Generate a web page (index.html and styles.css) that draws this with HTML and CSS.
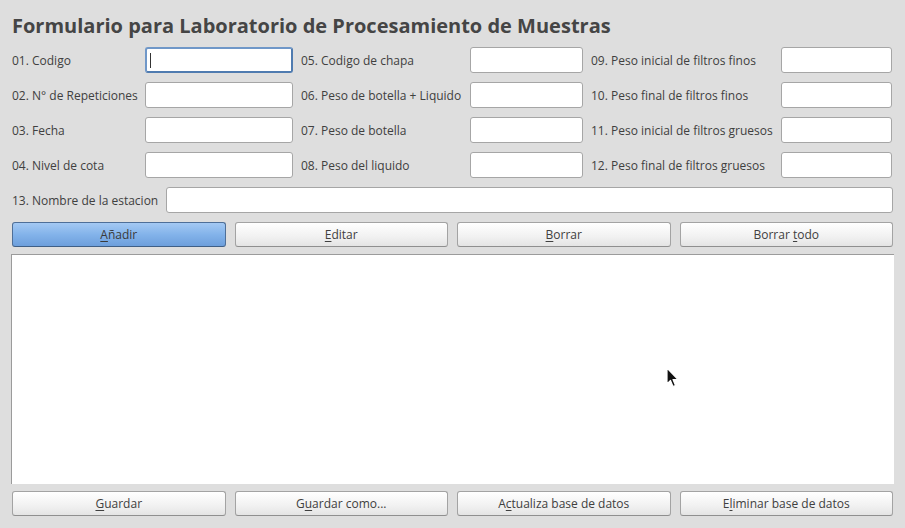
FILE: index.html
```html
<!DOCTYPE html>
<html lang="es">
<head>
<meta charset="utf-8">
<title>Formulario</title>
<link rel="stylesheet" href="styles.css">
</head>
<body>
<div class="app">
  <h1 class="title">Formulario para Laboratorio de Procesamiento de Muestras</h1>
  <div class="grid">
    <label class="lbl">01. Codigo</label><div class="inp focus"><span class="caret"></span></div>
    <label class="lbl pad">05. Codigo de chapa</label><div class="inp"></div>
    <label class="lbl pad">09. Peso inicial de filtros finos</label><div class="inp"></div>

    <label class="lbl">02. N° de Repeticiones</label><div class="inp"></div>
    <label class="lbl pad">06. Peso de botella + Liquido</label><div class="inp"></div>
    <label class="lbl pad">10. Peso final de filtros finos</label><div class="inp"></div>

    <label class="lbl">03. Fecha</label><div class="inp"></div>
    <label class="lbl pad">07. Peso de botella</label><div class="inp"></div>
    <label class="lbl pad">11. Peso inicial de filtros gruesos</label><div class="inp"></div>

    <label class="lbl">04. Nivel de cota</label><div class="inp"></div>
    <label class="lbl pad">08. Peso del liquido</label><div class="inp"></div>
    <label class="lbl pad">12. Peso final de filtros gruesos</label><div class="inp"></div>
  </div>
  <div class="row13">
    <label class="lbl lbl13">13. Nombre de la estacion</label><div class="inp wide"></div>
  </div>
  <div class="btns">
    <button class="btn primary"><u>A</u>ñadir</button>
    <button class="btn"><u>E</u>ditar</button>
    <button class="btn"><u>B</u>orrar</button>
    <button class="btn">Borrar <u>t</u>odo</button>
  </div>
  <div class="list"></div>
  <div class="btns bottom">
    <button class="btn"><u>G</u>uardar</button>
    <button class="btn">G<u>u</u>ardar como...</button>
    <button class="btn">A<u>c</u>tualiza base de datos</button>
    <button class="btn">E<u>l</u>iminar base de datos</button>
  </div>
  <svg class="pointer" width="14" height="22" viewBox="0 0 14 22">
    <path d="M1 1 L1 17 L4.5 13.5 L7 19.5 L9.5 18.5 L7 12.5 L12 12.5 Z" fill="#111" stroke="#fff" stroke-width="1.2" stroke-linejoin="round"/>
  </svg>
</div>
</body>
</html>
```
FILE: styles.css
```css
html, body {
  margin: 0;
  padding: 0;
  background: #dedede;
}
.app {
  position: relative;
  width: 905px;
  height: 528px;
  box-sizing: border-box;
  padding: 12px 12px 0 12px;
  font-family: "Open Sans", "Liberation Sans", sans-serif;
  color: #3f3f3f;
}
.title {
  margin: 0;
  font-size: 20px;
  font-weight: bold;
  line-height: 27px;
  color: #454545;
  height: 27px;
}
.grid {
  margin-top: 8px;
  display: grid;
  grid-template-columns: 133px 148px 177px 113px 198px 111px;
  grid-auto-rows: 26px;
  row-gap: 9px;
}
.lbl {
  font-size: 12px;
  line-height: 27px;
  white-space: nowrap;
  color: #404040;
}
.pad { padding-left: 8px; }
.inp {
  box-sizing: border-box;
  height: 26px;
  background: #fff;
  border: 1px solid #a6a6a6;
  border-radius: 3px;
  position: relative;
}
.inp.focus {
  border: 2px solid #5b86bb;
  border-color: #6f97c8 #4f7bb0 #4f7bb0 #6f97c8;
}
.caret {
  position: absolute;
  left: 3px;
  top: 4px;
  width: 1px;
  height: 15px;
  background: #333;
}
.row13 {
  margin-top: 9px;
  display: flex;
  height: 26px;
}
.lbl13 { width: 154px; flex: none; }
.inp.wide { flex: 1; }
.btns {
  margin-top: 9px;
  display: grid;
  grid-template-columns: repeat(4, 1fr);
  column-gap: 9px;
}
.btn {
  height: 25px;
  box-sizing: border-box;
  font-family: "Open Sans", "Liberation Sans", sans-serif;
  font-size: 12px;
  color: #404040;
  background: linear-gradient(#ffffff, #f1f1f1 60%, #e4e4e4);
  border: 1px solid #a3a3a3;
  border-bottom-color: #8f8f8f;
  border-radius: 3px;
  padding: 0;
}
.btn u { text-decoration-thickness: 1px; text-underline-offset: 2px; }
.btn.primary {
  background: linear-gradient(#a4c9f3, #83b3ea 50%, #6d9fdc);
  border-color: #4e6f98 #4e6f98 #3f5f86 #4e6f98;
  color: #3a3a3a;
}
.list {
  margin: 7px -1px 0 -1px;
  height: 230px;
  background: #fff;
  border-top: 1px solid #9b9b9b;
  border-left: 1px solid #9b9b9b;
  box-sizing: border-box;
}
.btns.bottom { margin-top: 7px; }
.pointer {
  position: absolute;
  left: 666px;
  top: 367px;
}
```
